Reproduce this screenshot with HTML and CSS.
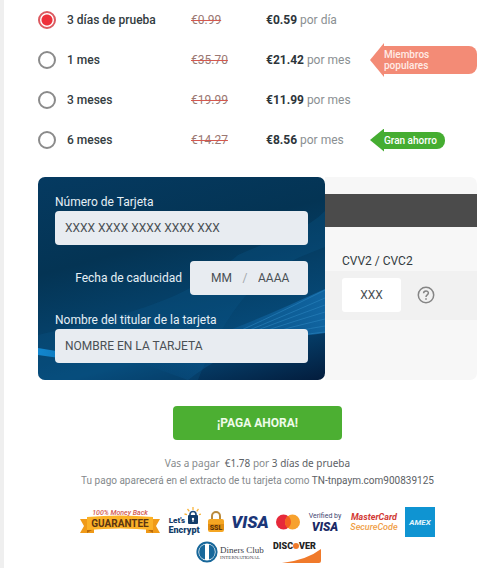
FILE: index.html
```html
<!DOCTYPE html>
<html lang="es">
<head>
    <meta charset="UTF-8">
    <meta name="viewport" content="width=device-width, initial-scale=1.0">
    <title>Pago</title>
    <link rel="stylesheet" href="styles.css">
</head>
<body>
    <form class="pago">
        <div class="planes">
            <label class="plan">
                <input type="radio" name="plan" value="prueba" checked>
                <span class="nombre">3 días de prueba</span>
                <del>€0.99</del>
                <span class="precio"><b>€0.59</b> por día</span>
            </label>
            <label class="plan">
                <input type="radio" name="plan" value="1">
                <span class="nombre">1 mes</span>
                <del>€35.70</del>
                <span class="precio"><b>€21.42</b> por mes</span>
                <span class="etiqueta popular">Miembros populares</span>
            </label>
            <label class="plan">
                <input type="radio" name="plan" value="3">
                <span class="nombre">3 meses</span>
                <del>€19.99</del>
                <span class="precio"><b>€11.99</b> por mes</span>
            </label>
            <label class="plan">
                <input type="radio" name="plan" value="6">
                <span class="nombre">6 meses</span>
                <del>€14.27</del>
                <span class="precio"><b>€8.56</b> por mes</span>
                <span class="etiqueta ahorro">Gran ahorro</span>
            </label>
        </div>

        <div class="tarjeta">
            <div class="frente">
                <svg class="ondas" viewBox="0 0 287 203" preserveAspectRatio="none" aria-hidden="true">
                    <defs>
                        <linearGradient id="brillo" x1="0" x2="1">
                            <stop offset="0" stop-color="#0a5c96" stop-opacity="0"/>
                            <stop offset="1" stop-color="#1268a6" stop-opacity=".9"/>
                        </linearGradient>
                        <linearGradient id="raya" x1="0" x2="1">
                            <stop offset="0" stop-color="#1287cf"/>
                            <stop offset="1" stop-color="#0b4f85" stop-opacity="0"/>
                        </linearGradient>
                    </defs>
                    <path d="M0 158C80 138 140 130 200 78C235 62 265 56 287 34V70C235 90 200 105 160 203H0Z" fill="#0b5788" opacity=".3"/>
                    <path d="M100 185C180 160 230 138 287 112V156C240 162 200 164 150 203Z" fill="url(#brillo)"/>
                    <path d="M0 171Q100 190 200 170V174Q100 194 0 178Z" fill="url(#raya)"/>
                    <g fill="none" stroke="#2b84be" stroke-width="1" opacity=".6">
                        <path d="M150 177Q230 142 287 113"/>
                        <path d="M150 178Q230 146 287 121"/>
                        <path d="M150 179Q230 149 287 128"/>
                        <path d="M150 180Q230 152 287 135"/>
                        <path d="M150 181Q230 155 287 142"/>
                        <path d="M150 182Q230 158 287 149"/>
                        <path d="M150 183Q230 161 287 155"/>
                    </g>
                </svg>
                <div class="campo">
                    <label for="numero">Número de Tarjeta</label>
                    <input type="text" id="numero" placeholder="XXXX XXXX XXXX XXXX XXX">
                </div>
                <div class="caducidad">
                    <label for="mes">Fecha de caducidad</label>
                    <div class="fecha">
                        <input type="text" id="mes" placeholder="MM">
                        <span>/</span>
                        <input type="text" id="anio" placeholder="AAAA" aria-label="Año">
                    </div>
                </div>
                <div class="campo">
                    <label for="titular">Nombre del titular de la tarjeta</label>
                    <input type="text" id="titular" placeholder="NOMBRE EN LA TARJETA">
                </div>
            </div>
            <div class="reverso">
                <div class="banda"></div>
                <label for="cvv">CVV2 / CVC2</label>
                <div class="codigo">
                    <input type="text" id="cvv" placeholder="XXX">
                    <button type="button" class="ayuda" aria-label="Ayuda">
                        <svg width="18" height="18" viewBox="0 0 18 18" fill="none" stroke="#858585">
                            <circle cx="9" cy="9" r="7.7" stroke-width="1.5"/>
                            <path d="M6.6 7.3C6.6 4.1 11.4 4.2 11.4 7.1C11.4 8.9 9 9 9 10.9" stroke-width="1.5"/>
                            <path d="M9 12.2V13.8" stroke-width="1.6"/>
                        </svg>
                    </button>
                </div>
            </div>
        </div>

        <button type="submit" class="pagar">¡PAGA AHORA!</button>

        <div class="aviso">
            <p>Vas a pagar &nbsp;<span>€1.78</span> por <span>3 días de prueba</span></p>
            <p class="extracto">Tu pago aparecerá en el extracto de tu tarjeta como <span>TN-tnpaym.com900839125</span></p>
        </div>

        <div class="logos">
            <svg width="80" height="30" viewBox="0 0 80 30">
                <path d="M0 12H14V26H0L4 19ZM80 12H66V26H80L76 19Z" fill="#f09a18"/>
                <path d="M7 23V26L12 23ZM73 23V26L68 23Z" fill="#b96a0b"/>
                <path d="M7 10Q40 7 73 10V23Q40 20 7 23Z" fill="#fbb127"/>
                <text x="40" y="8" font-size="7" font-style="italic" font-weight="500" fill="#d4584e">100% Money Back</text>
                <text x="40" y="20" font-size="10" font-weight="700" fill="#5b3511">GUARANTEE</text>
            </svg>
            <svg width="34" height="30" viewBox="0 0 34 30">
                <g stroke="#f9b43a" stroke-width="1.3">
                    <path d="M26 0V3M20.5 2L22.3 4.3M31.5 2L29.7 4.3M17.5 7L20 7.6M34 7L32 7.6"/>
                </g>
                <path d="M23 9V7.5A3 3 0 0 1 29 7.5V9" fill="none" stroke="#1d4c7d" stroke-width="1.7"/>
                <rect x="21" y="8" width="10" height="9" rx="1" fill="#123c69"/>
                <circle cx="26" cy="12" r="1.2" fill="#fff"/>
                <path d="M26 12V15" stroke="#fff"/>
                <text x="10" y="16" font-size="8" font-weight="900" fill="#123c69">Let's</text>
                <text x="17" y="26" font-size="9" font-weight="900" fill="#123c69">Encrypt</text>
            </svg>
            <svg width="16" height="30" viewBox="0 0 16 30">
                <path d="M4 14V9A4 4 0 0 1 12 9V14" fill="none" stroke="#b98a3c" stroke-width="2"/>
                <rect x="0" y="12" width="16" height="13" rx="2" fill="#f5a623"/>
                <rect x="0" y="17" width="16" height="6" fill="#e08d12"/>
                <text x="8" y="23" font-size="7" font-weight="700" fill="#4c2a0b">SSL</text>
            </svg>
            <svg width="38" height="30" viewBox="0 0 38 30">
                <text x="19" y="21" font-size="17" font-style="italic" font-weight="900" fill="#1b3678">VISA</text>
            </svg>
            <svg width="24" height="30" viewBox="0 0 24 30">
                <circle cx="7.5" cy="15" r="7.5" fill="#e6293a"/>
                <circle cx="16.5" cy="15" r="7.5" fill="#f7a12d"/>
                <path d="M12 9A7.5 7.5 0 0 1 12 21A7.5 7.5 0 0 1 12 9Z" fill="#f4601f"/>
            </svg>
            <svg width="36" height="30" viewBox="0 0 36 30">
                <text x="18" y="11" font-size="7" fill="#3d4670">Verified by</text>
                <text x="18" y="24" font-size="12" font-style="italic" font-weight="900" fill="#1b2a66">VISA</text>
            </svg>
            <svg width="48" height="30" viewBox="0 0 48 30">
                <text x="24" y="13" font-size="9" font-style="italic" font-weight="700" fill="#d23a35">MasterCard</text>
                <text x="24" y="23" font-size="9" font-style="italic" font-weight="500" fill="#efa048">SecureCode</text>
            </svg>
            <svg width="30" height="30" viewBox="0 0 30 30">
                <rect width="30" height="30" fill="#0f94d2"/>
                <text x="15" y="18" font-size="8" font-style="italic" font-weight="700" fill="#e3f5fd">AMEX</text>
            </svg>
        </div>
        <div class="logos segunda">
            <svg width="70" height="24" viewBox="0 0 70 24" class="diners">
                <circle cx="12" cy="12" r="9.6" fill="#fff" stroke="#17679a" stroke-width="2"/>
                <path d="M10 4.6A7.6 7.6 0 0 0 10 19.4Z" fill="#17679a"/>
                <path d="M14 4.6A7.6 7.6 0 0 1 14 19.4Z" fill="#17679a"/>
                <text x="25" y="13" font-size="9" fill="#3b4148">Diners Club</text>
                <text x="25" y="19" font-size="5" fill="#3b4148">INTERNATIONAL</text>
            </svg>
            <svg width="48" height="24" viewBox="0 0 48 24">
                <path d="M9 23Q34 20 48 9V21Q48 23 46 23Z" fill="#f07a2b"/>
                <text x="0" y="9" font-size="9" font-weight="900" fill="#222">DISC</text>
                <circle cx="23" cy="6" r="3" fill="#f07a2b"/>
                <text x="26" y="9" font-size="9" font-weight="900" fill="#222">VER</text>
            </svg>
        </div>
    </form>
</body>
</html>
```

FILE: styles.css
```css
* {
    box-sizing: border-box;
}

body {
    margin: 0;
    min-height: 100vh;
    background-color: #fff;
    border-left: 4px solid #efefef;
    font-family: Roboto, "Liberation Sans", sans-serif;
    font-size: 12px;
    color: #333c41;
}

input,
button {
    font-family: inherit;
    font-size: 12px;
    border: none;
    margin: 0;
    padding: 0;
}

.pago {
    padding: 0 23px 0 34px;
}

.plan {
    display: grid;
    grid-template-columns: 29px 123px 76px 104px 1fr;
    align-items: center;
    height: 40px;
}

.plan input {
    appearance: none;
    width: 18px;
    height: 18px;
    border: 2px solid #8b8b8b;
    border-radius: 50%;
}

.plan input:checked {
    border-color: #dc5a60;
    background: radial-gradient(circle, #ee303a 5px, #fff 6px);
}

.nombre {
    font-weight: 500;
}

.plan del {
    justify-self: start;
    padding: 0 1px;
    color: #9a7772;
    text-decoration: line-through #d5584f;
}

.precio {
    color: #8a8f92;
    white-space: nowrap;
}

.precio b {
    color: #2d353a;
}

.etiqueta {
    position: relative;
    justify-self: start;
    padding: 3px 8px 3px 14px;
    border-radius: 0 8px 8px 0;
    font-size: 10px;
    line-height: 11px;
    font-weight: 500;
    color: #fff;
    background: linear-gradient(to right, transparent 13px, var(--fondo) 13px);
}

/* punta de la flecha */
.etiqueta::before {
    content: "";
    position: absolute;
    left: 0;
    top: -3px;
    bottom: -3px;
    width: 14px;
    background-color: var(--fondo);
    clip-path: polygon(0 50%, 100% 0, 100% 100%);
}

.popular {
    --fondo: #f38b76;
    justify-self: stretch;
    padding-right: 30px;
    color: #ffece6;
}

.ahorro {
    --fondo: #45ad31;
}

.tarjeta {
    display: grid;
    grid-template-columns: 287fr 152fr;
    margin-top: 17px;
}

.frente {
    position: relative;
    padding: 16px 17px 17px;
    border-radius: 7px;
    overflow: hidden;
    background: linear-gradient(165deg, #053a61 0%, #043454 35%, #064a79 75%, #031c3c 100%);
}

.ondas {
    position: absolute;
    left: 0;
    top: 0;
    width: 100%;
    height: 100%;
}

.campo,
.caducidad {
    position: relative;
}

.frente label {
    color: #e6f0f6;
}

.campo label {
    display: block;
    line-height: 18px;
}

.frente input {
    height: 34px;
    color: #444b50;
}

.campo input {
    display: block;
    width: 100%;
    padding: 0 10px;
    border-radius: 4px;
    background-color: #e8ecf1;
}

::placeholder {
    color: #4a5055;
    opacity: 1;
}

.caducidad {
    display: flex;
    align-items: center;
    justify-content: flex-end;
    gap: 8px;
    margin: 16px 0;
}

.fecha {
    display: flex;
    align-items: center;
    justify-content: space-between;
    width: 118px;
    padding: 0 16px;
    border-radius: 4px;
    background-color: #e8ecf1;
    color: #a3a8ac;
}

.fecha input {
    width: 34px;
    background: none;
}

.fecha input:first-child {
    width: 26px;
    text-align: right;
}

.reverso {
    padding-top: 17px;
    border-radius: 0 7px 7px 0;
    background-color: #f7f7f7;
}

.banda {
    height: 33px;
    margin-bottom: 24px;
    background-color: #4b4b4b;
}

.reverso label {
    display: block;
    padding-left: 17px;
    line-height: 20px;
}

.codigo {
    display: flex;
    align-items: center;
    gap: 16px;
    padding: 7px 17px 8px;
    background-color: #f1f1f1;
}

.codigo input {
    width: 59px;
    height: 34px;
    text-align: center;
    border-radius: 3px;
    background-color: #fff;
}

.ayuda {
    display: flex;
    background: none;
    cursor: pointer;
}

.pagar {
    display: block;
    width: 169px;
    height: 34px;
    margin: 26px auto 15px;
    border-radius: 4px;
    background-color: #4caf32;
    color: #effbe9;
    font-weight: 700;
    cursor: pointer;
}

.aviso {
    font-family: "Noto Sans", "Open Sans", sans-serif;
    font-size: 10px;
    line-height: 17px;
    text-align: center;
    color: #85898c;
}

.aviso p {
    margin: 0;
    white-space: nowrap;
}

.aviso .extracto {
    font-family: Roboto, sans-serif;
}

.aviso span {
    color: #5c6165;
}

.logos {
    display: flex;
    justify-content: center;
    gap: 7px;
    margin-top: 18px;
}

.logos text {
    text-anchor: middle;
}

.segunda {
    gap: 8px;
    margin-top: 3px;
}

.segunda text {
    text-anchor: start;
}

.diners text {
    font-family: "Liberation Serif", serif;
}
```
